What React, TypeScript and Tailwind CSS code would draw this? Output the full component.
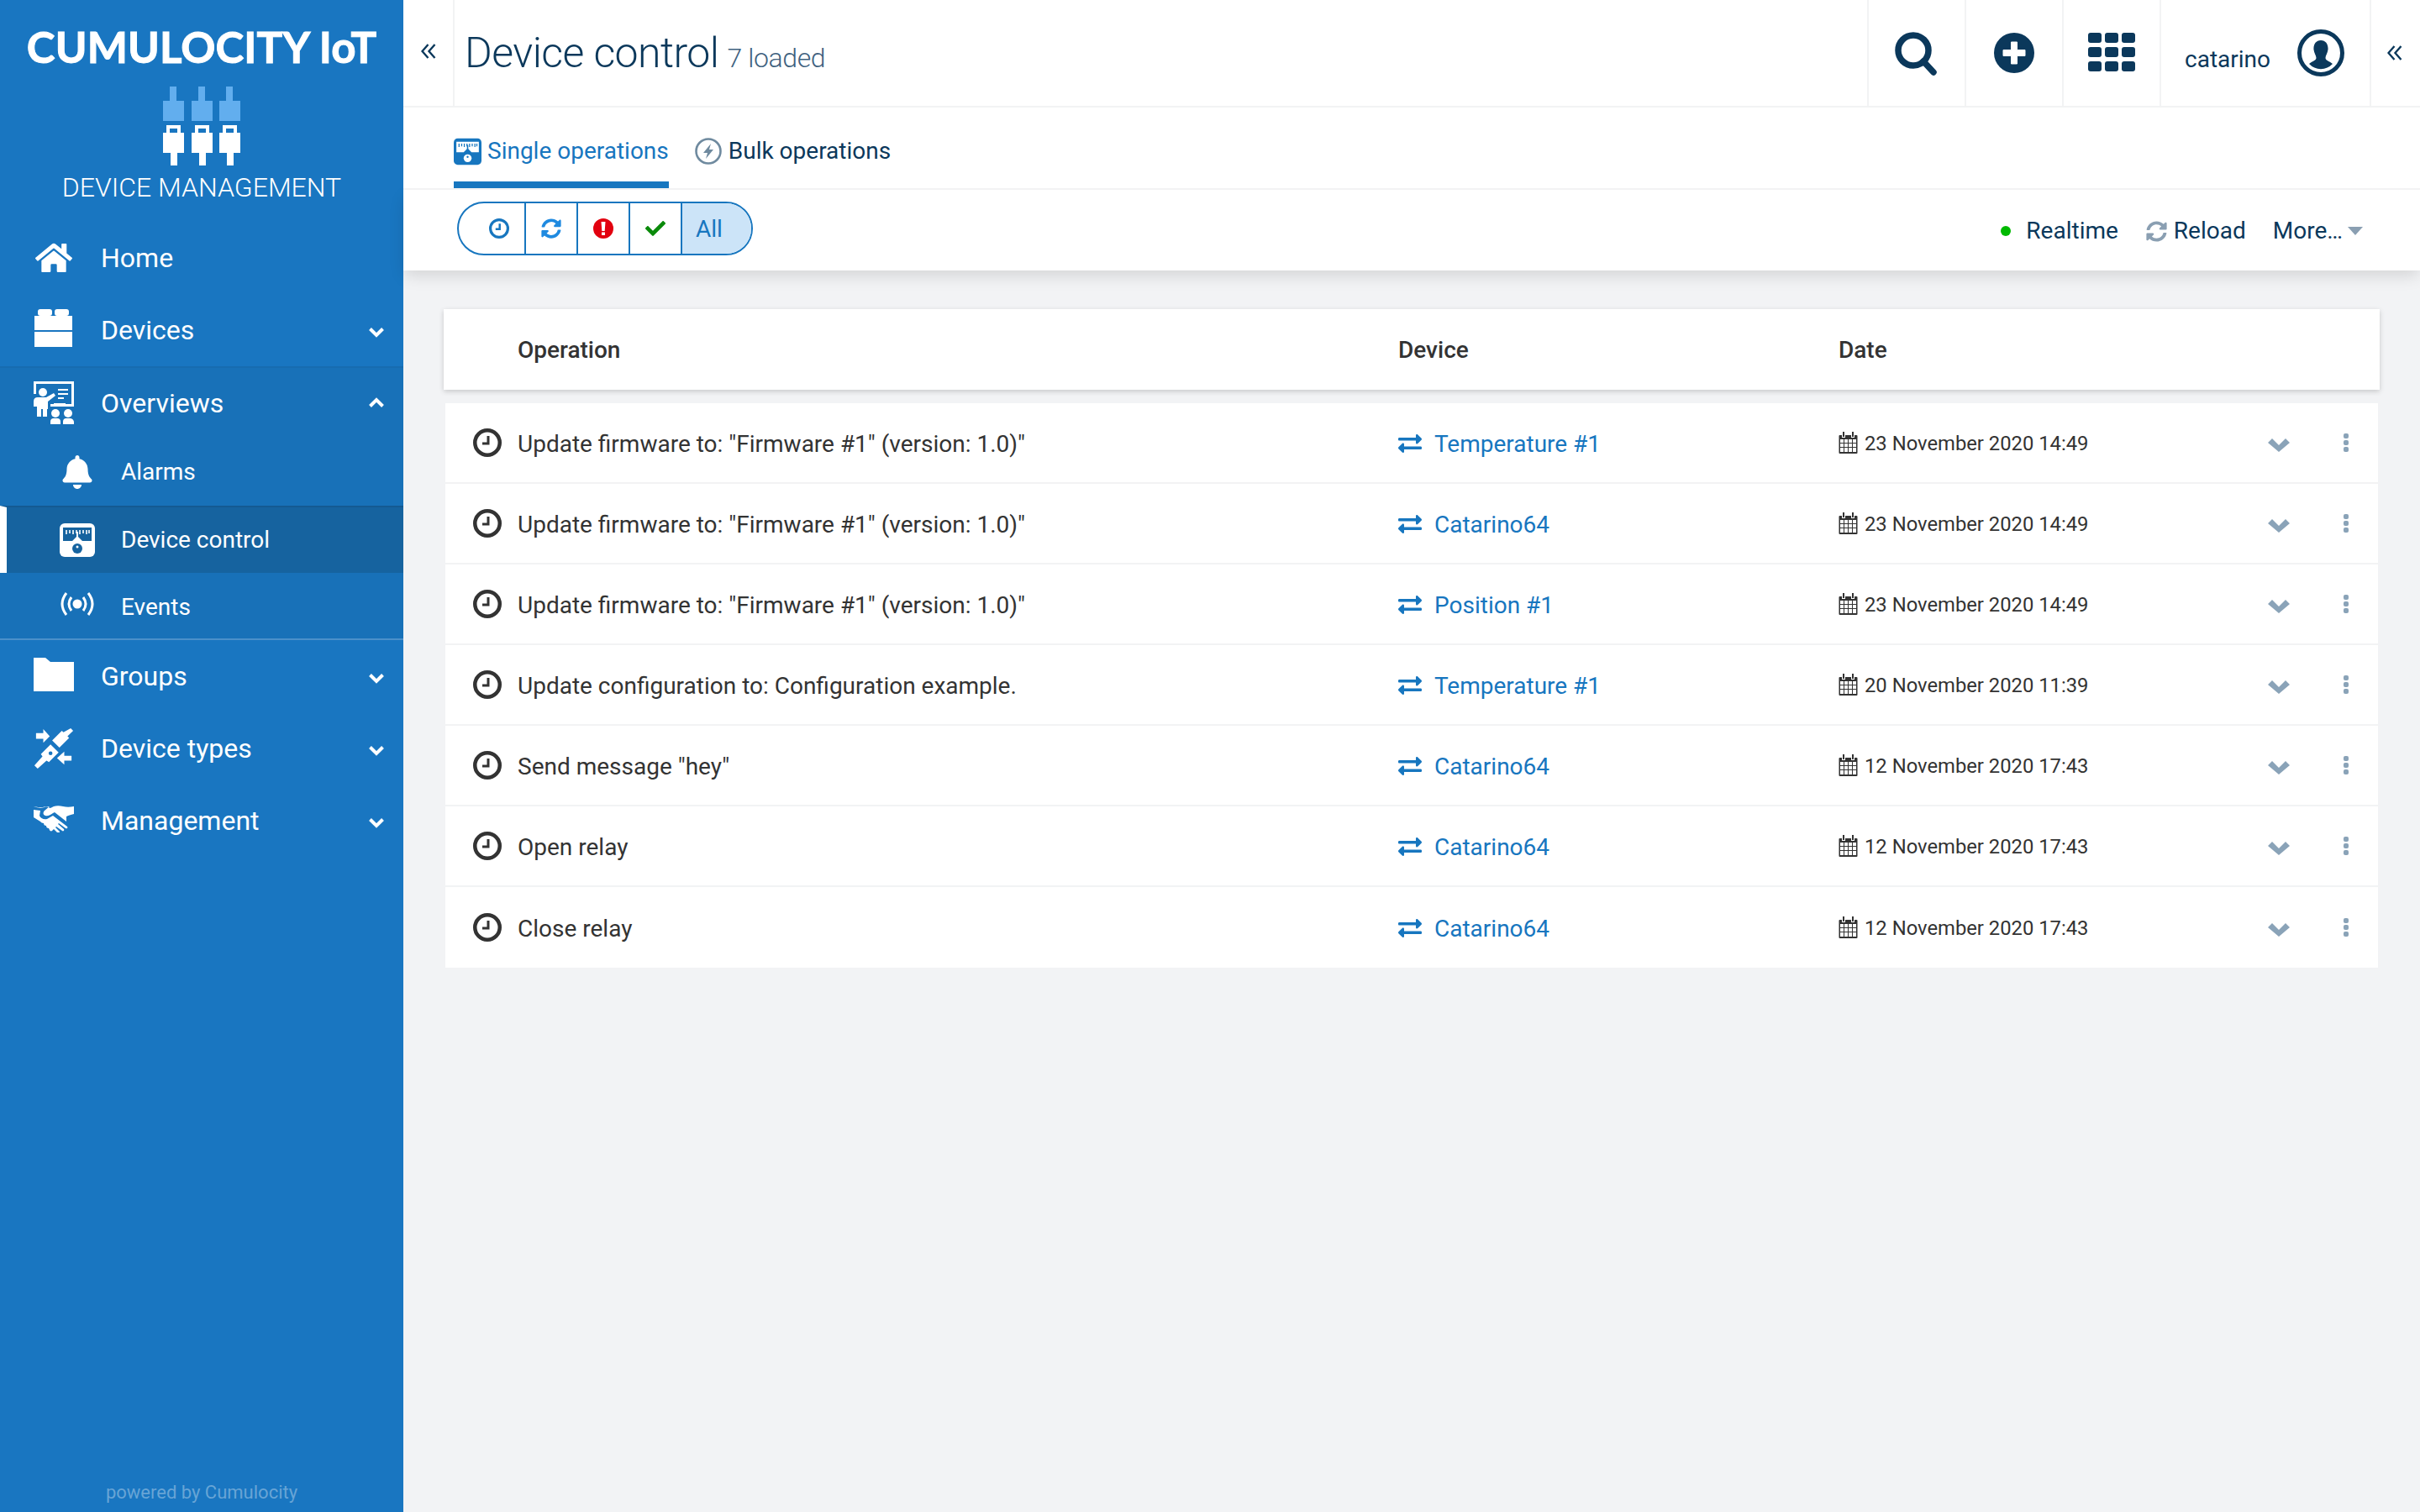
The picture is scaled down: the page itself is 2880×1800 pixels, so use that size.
import React from "react";
import { FaHome, FaBell, FaExchangeAlt, FaCheck, FaSyncAlt } from "react-icons/fa";

const Logo = () => (
  <svg width="96" height="96" viewBox="0 0 96 96" className="block">
    {[0, 34, 67].map((x) => (
      <g key={x}>
        <path d={`M${x + 9} 0h8v17h9v24H${x + 1}V17h8z`} fill="#62aeee" />
        <path fillRule="evenodd" d={`M${x + 5} 46h17v9h4v24h-8v15h-8V79H${x + 1}V55h4zM${x + 9} 50v5h9v-5z`} fill="#fff" />
      </g>
    ))}
  </svg>
);

const Blocks = () => (
  <svg className="mb-[4px]" width="46" height="46" viewBox="0 0 46 46" fill="#fff">
    <rect x="4" y="0" width="17" height="8" rx="3" />
    <rect x="24" y="0" width="17" height="8" rx="3" />
    <rect x="0" y="8" width="45" height="17" />
    <rect x="0" y="27" width="45" height="18" />
  </svg>
);

const Teacher = () => (
  <svg width="48" height="52" viewBox="0 0 48 52" fill="#fff">
    <path fillRule="evenodd" d="M0 0h48v30H20v-3h25V3H3v12H0z" />
    <circle cx="11" cy="13" r="5" />
    <path d="M5 19h10l9-5 2 3-9 7v9h-1v9h-5v-9h-2v9H4V30H0v-6q0-5 5-5z" />
    <path d="M29 9h12v2H29zM29 14h12v2H29zM29 19h7v2h-7zM24 26h14v2H24z" />
    <circle cx="26" cy="38" r="5" />
    <circle cx="41" cy="38" r="5" />
    <path d="M20 51v-3q0-4 4-4h4q4 0 4 4v3zM35 51v-3q0-4 4-4h4q4 0 5 4v3z" />
  </svg>
);

const Gauge = ({ bg, fg, size }: { bg: string; fg: string; size: number }) => (
  <svg width={size} height={size} viewBox="0 0 42 40">
    <rect x="0" y="0" width="42" height="40" rx="6" fill={bg} />
    <path d="M4 5h34v16H27l-6-6-6 6H4z" fill={fg} />
    <path d="M8 8v5M12 8v4M16 8v5M20 8v4M24 8v5M28 8v4M32 8v5M35 8v4" stroke={bg} strokeWidth="1.6" />
    <path d="M21 10v9" stroke={bg} strokeWidth="2" />
    <circle cx="21" cy="30" r="6" fill={fg} />
    <circle cx="21" cy="28" r="1.5" fill={bg} />
  </svg>
);

const Signal = () => (
  <svg className="mb-[8px]" width="42" height="30" viewBox="0 0 42 30" fill="none" stroke="#fff" strokeWidth="3">
    <circle cx="21" cy="15" r="5.5" fill="#fff" stroke="none" />
    <path d="M14 7q-6 8 0 16M28 7q6 8 0 16M8 2q-10 13 0 26M34 2q10 13 0 26" />
  </svg>
);

const Folder = () => (
  <svg className="mb-[4px]" width="48" height="40" viewBox="0 0 48 40" fill="#fff">
    <path d="M0 0h14l6 5h28v35H0z" />
  </svg>
);

const Plugs = () => (
  <svg width="50" height="50" viewBox="0 0 50 50" fill="#fff">
    <path d="M46 0l3 3-7 7 2 2-12 12-9-9L35 3l2 2z" />
    <path d="M21 20l10 10-12 12-3-2-11 10-4-4 10-11-2-3z" />
    <circle cx="21" cy="31" r="2.4" fill="#1976c1" />
    <path d="M3 6h9V1l8 9-8 8v-5H3zM47 34h-9v-5l-9 8 9 8v-5h9z" />
  </svg>
);

const Shake = () => (
  <svg className="mb-[4px]" width="48" height="32" viewBox="0 0 48 32" fill="#fff">
    <path d="M0 1c5 2 9 2 13 1l6-1-6 5c-2 2-2 5 1 6 3 1 6-1 9-3l2-1 14 11v-6c2-1 5-2 9-3V1c-5 1-9 1-13 0-4-1-8-1-11 0l-4 2c-3-1-6-2-9-1-4 0-7 0-11-1z" />
    <path d="M0 14v-9l8 1-1 6c1 3 5 5 9 4l7-4 17 13c1 1 0 3-2 2l-8-6-1 1 7 6c1 2-1 3-2 2l-7-5-1 1 5 5c0 2-2 2-3 1l-4-4-2 2c-1 1-3 0-3-1l-1-2c-2 0-3-1-3-3-2 0-3-1-3-3-2 0-3-1-4-2z" />
  </svg>
);

const Clock = ({ color, size, sw, hand }: { color: string; size: number; sw: number; hand: number }) => (
  <svg width={size} height={size} viewBox="0 0 34 34" fill="none" stroke={color}>
    <circle cx="17" cy="17" r={17 - sw / 2} strokeWidth={sw} />
    <path d="M18 9v9h-7" strokeWidth={hand} />
  </svg>
);

const Calendar = () => (
  <svg width="23" height="26" viewBox="0 0 23 26" fill="#333">
    <path fillRule="evenodd" d="M1.500 4h2.500v3h4V4h7v3h4V4h2.500a1 1 0 0 1 1 1v20a1 1 0 0 1-1 1h-20a1 1 0 0 1-1-1V5a1 1 0 0 1 1-1zM2 9v15h19V9z" />
    <path d="M5 0h2v6H5zM16 0h2v6h-2z" />
    <path d="M6.500 9v15M11.500 9v15M16.500 9v15M2 13.500h19M2 18.500h19" stroke="#333" strokeWidth="1" />
  </svg>
);

const Chev = ({ up }: { up?: boolean }) => (
  <svg className="block" width="18" height="12" viewBox="0 0 18 12" fill="none" stroke="#fff" strokeWidth="4">
    <path d={up ? "M1.500 10.500L9 3l7.500 7.500" : "M1.500 1.500L9 9l7.500-7.500"} />
  </svg>
);

const DoubleLeft = () => (
  <svg width="18" height="18" viewBox="0 0 18 18" fill="none" stroke="#0b385b" strokeWidth="2.400">
    <path d="M8.500 1L1.500 9l7 8M16.500 1L9.500 9l7 8" />
  </svg>
);

const NavRow = ({ icon, label, chev, h = "h-[86px]" }: { icon: React.ReactNode; label: string; chev?: "up" | "down"; h?: string }) => (
  <div className={`flex items-center ${h}`}>
    <div className="flex w-[120px] shrink-0 pl-[40px]">
      <div className="flex w-[48px] justify-center">{icon}</div>
    </div>
    <span className="text-[32px] leading-none text-white">{label}</span>
    {chev && (
      <span className={`ml-auto mr-[23px] text-white ${chev === "up" ? "pb-[2px]" : "pt-[6px]"}`}>
        <Chev up={chev === "up"} />
      </span>
    )}
  </div>
);

const SubRow = ({ icon, label, active, h = "h-[80px]" }: { icon: React.ReactNode; label: string; active?: boolean; h?: string }) => (
  <div className={`flex items-center ${h} ${active ? "border-l-[8px] border-t-2 border-l-white border-t-[#145a92] bg-[#16639f]" : ""}`}>
    <div className={`flex shrink-0 ${active ? "w-[136px] pl-[63px]" : "w-[144px] pl-[71px]"}`}>
      <div className="flex w-[42px] justify-center">{icon}</div>
    </div>
    <span className="text-[28px] leading-none text-white">{label}</span>
  </div>
);

const rows = [
  ['Update firmware to: "Firmware #1" (version: 1.0)"', "Temperature #1", "23 November 2020 14:49"],
  ['Update firmware to: "Firmware #1" (version: 1.0)"', "Catarino64", "23 November 2020 14:49"],
  ['Update firmware to: "Firmware #1" (version: 1.0)"', "Position #1", "23 November 2020 14:49"],
  ["Update configuration to: Configuration example.", "Temperature #1", "20 November 2020 11:39"],
  ['Send message "hey"', "Catarino64", "12 November 2020 17:43"],
  ["Open relay", "Catarino64", "12 November 2020 17:43"],
  ["Close relay", "Catarino64", "12 November 2020 17:43"],
];

const navy = "#0b385b";

export default function App() {
  return (
    <div className="flex h-[1800px] w-[2880px] overflow-hidden bg-[#f2f3f5] font-['Roboto',sans-serif]">
      <aside className="flex w-[480px] shrink-0 flex-col bg-[#1976c1]">
        <div className="flex h-[264px] flex-col items-center pt-[26px]">
          <div className="font-['Lato',sans-serif] text-[51px] font-bold leading-[60px] tracking-[0.1px] whitespace-nowrap text-white [-webkit-text-stroke:1px_white]">CUMULOCITY IoT</div>
          <div className="ml-[1px] mt-[17px]"><Logo /></div>
          <div className="mt-[5px] text-[32px] font-light leading-[38px] text-white">DEVICE MANAGEMENT</div>
        </div>
        <NavRow icon={<FaHome size={44} color="#fff" />} label="Home" />
        <NavRow icon={<Blocks />} label="Devices" chev="down" />
        <div className="border-y-2 border-t-[#176cb0] border-b-[#4b90ca] bg-[#1871b8]">
          <NavRow icon={<Teacher />} label="Overviews" chev="up" h="h-[84px]" />
          <SubRow icon={<FaBell size={40} color="#fff" />} label="Alarms" />
          <SubRow icon={<Gauge bg="#fff" fg="#16639f" size={42} />} label="Device control" active />
          <SubRow icon={<Signal />} label="Events" h="h-[78px] pt-[4px]" />
        </div>
        <NavRow icon={<Folder />} label="Groups" chev="down" />
        <NavRow icon={<Plugs />} label="Device types" chev="down" />
        <NavRow icon={<Shake />} label="Management" chev="down" />
        <div className="mt-auto pb-[10px] text-center text-[22px] leading-[26px] text-white/35">powered by Cumulocity</div>
      </aside>

      <main className="flex min-w-0 flex-1 flex-col">
        <header className="flex h-[128px] items-stretch border-b-2 border-[#f2f3f4] bg-white text-[#0b385b]">
          <div className="flex w-[61px] items-center justify-center border-r-2 border-[#f2f3f4] pb-[4px]">
            <DoubleLeft />
          </div>
          <div className="flex items-baseline pl-[12px] pt-[33px] font-light">
            <span className="text-[50px] leading-[60px] tracking-[-0.57px]">Device control</span>
            <span className="ml-[10px] text-[32px] leading-none tracking-[-0.4px] text-[#3f6280]">7 loaded</span>
          </div>
          <div className="ml-auto flex items-stretch">
            <div className="flex w-[116px] items-center justify-center border-l-2 border-[#f2f3f4] pt-[2px]">
              <svg width="52" height="52" viewBox="0 0 52 52" fill="none" stroke={navy}>
                <circle cx="22" cy="22" r="18" strokeWidth="7.500" />
                <path d="M34 35l12 13" strokeWidth="7.500" strokeLinecap="round" />
              </svg>
            </div>
            <div className="flex w-[116px] items-center justify-center border-l-2 border-[#f2f3f4]">
              <svg width="48" height="48" viewBox="0 0 48 48">
                <circle cx="24" cy="24" r="24" fill={navy} />
                <path d="M20.500 11h7v9.500H37v7h-9.500V37h-7v-9.500H11v-7h9.500z" fill="#fff" strokeLinejoin="round" stroke="#fff" strokeWidth="1" />
              </svg>
            </div>
            <div className="flex w-[116px] items-center justify-center border-l-2 border-[#f2f3f4] pb-[2px]">
              <div className="grid grid-cols-3 gap-x-[4px] gap-y-[5px]">
                {Array.from({ length: 9 }).map((_, i) => (
                  <div key={i} className="h-[12px] w-[16px] rounded-[3px] bg-[#0b385b]" />
                ))}
              </div>
            </div>
            <div className="flex w-[250px] items-center border-l-2 border-[#f2f3f4] pl-[28px]">
              <span className="pt-[16px] text-[28px] leading-none">catarino</span>
              <svg className="ml-[32px]" width="56" height="56" viewBox="0 0 56 56">
                <circle cx="28" cy="28" r="25.500" fill="none" stroke={navy} strokeWidth="5" />
                <path d="M28 13c6 0 9 5 8.500 11-.3 4-3 7-3 10 0 3 5 4 8.500 7a19 19 0 0 1-28 0c3.500-3 8.500-4 8.500-7 0-3-2.700-6-3-10C19 18 22 13 28 13z" fill={navy} />
              </svg>
            </div>
            <div className="flex w-[60px] items-center justify-center border-l-2 border-[#f2f3f4] pr-[2px]">
              <DoubleLeft />
            </div>
          </div>
        </header>

        <nav className="relative z-20 flex h-[98px] items-stretch border-b-2 border-[#f2f3f4] bg-white pl-[60px] text-[28px]">
          <div className="flex h-[96px] items-center gap-[7px] border-b-[8px] border-[#1776bf] pt-[16px] text-[#1776bf]">
            <Gauge bg="#1776bf" fg="#fff" size={33} />
            <span>Single operations</span>
          </div>
          <div className="ml-[31px] flex h-[96px] items-center gap-[8px] pt-[8px] text-[#0b385b]">
            <svg width="32" height="32" viewBox="0 0 32 32" fill="none">
              <circle cx="16" cy="16" r="14.500" stroke="#6f8a9f" strokeWidth="2.600" />
              <path d="M19 7l-9 11h5l-2 7 9-11h-5z" fill="#6f8a9f" />
            </svg>
            <span>Bulk operations</span>
          </div>
        </nav>

        <div className="z-10 flex h-[96px] items-center bg-white pb-[4px] pl-[64px] pr-[68px] shadow-[0_8px_18px_-2px_rgba(0,0,0,0.13)]">
          <div className="flex h-[64px] w-[352px] items-stretch overflow-hidden rounded-full border-2 border-[#1776bf]">
            <div className="flex w-[80px] items-center justify-end border-r-2 border-[#1776bf] pr-[18px]">
              <Clock color="#1776bf" size={24} sw={4.500} hand={3.500} />
            </div>
            <div className="flex w-[62px] items-center justify-center border-r-2 border-[#1776bf]">
              <FaSyncAlt size={24} color="#1f8ae0" />
            </div>
            <div className="flex w-[62px] items-center justify-center border-r-2 border-[#1776bf]">
              <svg width="24" height="24" viewBox="0 0 24 24">
                <circle cx="12" cy="12" r="12" fill="#e2000f" />
                <path d="M9.500 4h5l-.8 11h-3.400zM10 16.500h4V20h-4z" fill="#fff" />
              </svg>
            </div>
            <div className="flex w-[62px] items-center justify-center border-r-2 border-[#1776bf]">
              <FaCheck size={24} color="#0a8a0a" />
            </div>
            <div className="flex-1 bg-[#cce4f8] pl-[16px] text-[28px] leading-[61px] text-[#1776bf]">All</div>
          </div>
          <div className="ml-auto flex items-center pt-[6px] text-[28px] text-[#0b385b]">
            <span className="h-[12px] w-[12px] rounded-full bg-[#00b900]" />
            <span className="ml-[18px]">Realtime</span>
            <FaSyncAlt className="ml-[33px]" size={25} color="#8a9fb2" />
            <span className="ml-[8px]">Reload</span>
            <span className="ml-[32px]">More…</span>
            <span className="ml-[6px] h-0 w-0 border-x-[9px] border-t-[10px] border-x-transparent border-t-[#8a9fb2]" />
          </div>
        </div>

        <section className="px-[48px] pt-[46px] text-[#333]">
          <div className="grid h-[96px] grid-cols-[1048px_524px_1fr] items-center bg-white pl-[88px] pt-[2px] text-[28px] font-medium shadow-[0_2px_6px_rgba(0,0,0,0.18)]">
            <span>Operation</span>
            <span>Device</span>
            <span>Date</span>
          </div>
          <div className="mx-[2px] mt-[16px] bg-white">
            {rows.map((r, i) => (
              <div key={i} className="flex h-[96px] items-center border-b-2 border-[#f2f3f4] last:border-b-0">
                <div className="flex w-[1134px] shrink-0 items-center pl-[33px]">
                  <Clock color="#333" size={34} sw={4.500} hand={3} />
                  <span className="ml-[19px] pt-[3px] text-[28px]">{r[0]}</span>
                </div>
                <div className="flex w-[524px] shrink-0 items-center text-[28px] text-[#1776bf]">
                  <span className="flex w-[28px] justify-center pt-[2px]"><FaExchangeAlt size={28} color="#1776bf" /></span>
                  <span className="ml-[15px] pt-[3px]">{r[1]}</span>
                </div>
                <div className="flex w-[524px] shrink-0 items-center text-[23.800px]">
                  <Calendar />
                  <span className="ml-[8px] pt-[4px]">{r[2]}</span>
                </div>
                <div className="-ml-[13px] flex items-center pt-[6px]">
                  <svg width="26" height="16" viewBox="0 0 26 16" fill="#8aa3b8"><path d="M0 5l5-5 8 8 8-8 5 5-13 11z" /></svg>
                </div>
                <div className="ml-[64px] flex flex-col gap-[2px]">
                  <span className="h-[6px] w-[6px] rounded-[2px] bg-[#8aa3b8]" />
                  <span className="h-[6px] w-[6px] rounded-[2px] bg-[#8aa3b8]" />
                  <span className="h-[6px] w-[6px] rounded-[2px] bg-[#8aa3b8]" />
                </div>
              </div>
            ))}
          </div>
        </section>
      </main>
    </div>
  );
}
